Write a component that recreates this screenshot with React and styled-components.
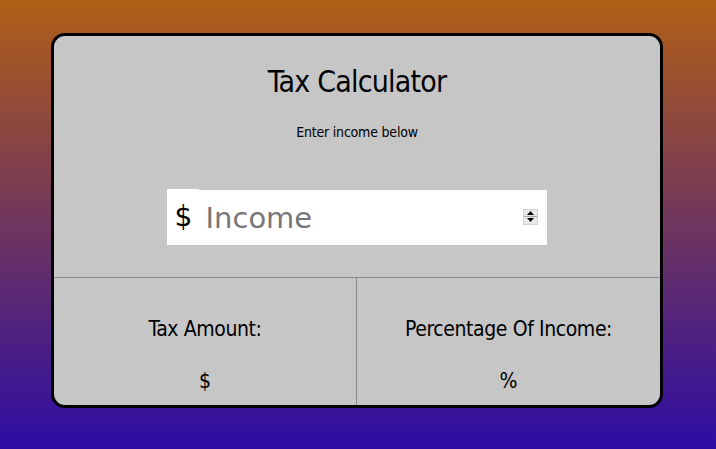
import React from "react";
import styled, { createGlobalStyle } from "styled-components";

const Global = createGlobalStyle`
  html, body { margin: 0; padding: 0; }
  body {
    width: 716px;
    height: 449px;
    overflow: hidden;
    background: linear-gradient(180deg, #b15f17 0%, #2d0ca4 100%);
    font-family: "DejaVu Sans Condensed", "DejaVu Sans", sans-serif;
  }
  * { box-sizing: border-box; }
`;

const Page = styled.div`
  display: flex;
  justify-content: center;
  padding-top: 33px;
`;

const Card = styled.div`
  width: 612px;
  height: 375px;
  margin-left: -2px;
  background: #c6c6c6;
  border: 3px solid #000;
  border-radius: 14px;
  overflow: hidden;
  display: flex;
  flex-direction: column;
`;

const Top = styled.section`
  height: 242px;
  display: flex;
  flex-direction: column;
  align-items: center;
  border-bottom: 1px solid #8a8a8a;
`;

const Title = styled.h1`
  margin: 26px 0 0;
  font-size: 30px;
  line-height: 40px;
  letter-spacing: -0.8px;
  font-weight: 400;
  color: #000;
`;

const Subtitle = styled.p`
  margin: 20px 0 0;
  font-size: 14px;
  line-height: 20px;
  letter-spacing: -0.2px;
  color: #000;
`;

const InputRow = styled.div`
  margin-top: 47px;
  display: flex;
  align-items: flex-end;
  margin-left: -1px;
`;

const Prefix = styled.span`
  width: 32px;
  height: 56px;
  background: #fff;
  display: flex;
  align-items: center;
  justify-content: center;
  font-family: "DejaVu Sans", sans-serif;
  font-size: 28px;
  color: #000;
  padding: 0 0 2px 2px;
`;

const Field = styled.div`
  width: 348px;
  height: 55px;
  background: #fff;
  display: flex;
  align-items: center;
  padding: 0 9px 0 7px;
`;

const Input = styled.input`
  flex: 1;
  min-width: 0;
  border: none;
  outline: none;
  background: transparent;
  font-family: "DejaVu Sans", sans-serif;
  font-size: 29px;
  color: #000;
  padding: 0;
  &::placeholder { color: #777; }
`;

const Spinner = styled.div`
  width: 15px;
  height: 16px;
  display: flex;
  flex-direction: column;
  background: #e9e9e9;
  border: 1px solid #d2d2d2;
  margin-top: -2px;
`;

const SpinHalf = styled.div`
  flex: 1;
  display: flex;
  align-items: center;
  justify-content: center;
  border-top: ${(p) => (p.$lower ? "1px solid #a8a8a8" : "none")};
`;

const Bottom = styled.section`
  flex: 1;
  display: grid;
  grid-template-columns: 302px 1fr;
`;

const Column = styled.div`
  display: flex;
  flex-direction: column;
  align-items: center;
  padding-top: 37px;
  border-left: ${(p) => (p.$divided ? "1px solid #8a8a8a" : "none")};
`;

const Label = styled.div`
  font-size: 21px;
  line-height: 28px;
  letter-spacing: -0.4px;
  color: #000;
`;

const Value = styled.div`
  margin-top: 24px;
  font-size: 21px;
  line-height: 28px;
  color: #000;
`;

const Tri = ({ down }) => (
  <svg width="7" height="4" viewBox="0 0 7 4">
    <path d={down ? "M0 0 L7 0 L3.5 4 Z" : "M0 4 L7 4 L3.5 0 Z"} fill="#000" />
  </svg>
);

export default function App() {
  return (
    <>
      <Global />
      <Page>
        <Card>
          <Top>
            <Title>Tax Calculator</Title>
            <Subtitle>Enter income below</Subtitle>
            <InputRow>
              <Prefix>$</Prefix>
              <Field>
                <Input type="text" placeholder="Income" />
                <Spinner>
                  <SpinHalf><Tri /></SpinHalf>
                  <SpinHalf $lower><Tri down /></SpinHalf>
                </Spinner>
              </Field>
            </InputRow>
          </Top>
          <Bottom>
            <Column>
              <Label>Tax Amount:</Label>
              <Value>$</Value>
            </Column>
            <Column $divided>
              <Label>Percentage Of Income:</Label>
              <Value>%</Value>
            </Column>
          </Bottom>
        </Card>
      </Page>
    </>
  );
}
